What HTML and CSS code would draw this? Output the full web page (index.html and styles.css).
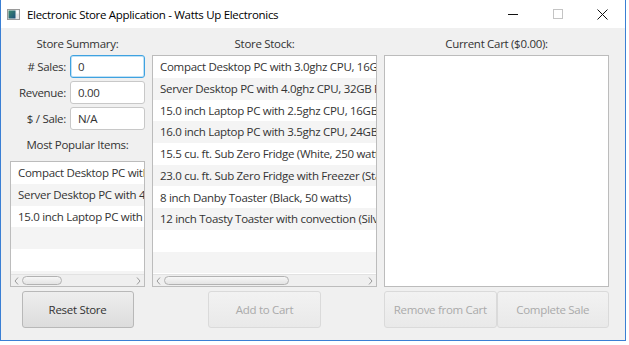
FILE: index.html
```html
<!DOCTYPE html>
<html lang="en">
<head>
    <meta charset="UTF-8">
    <meta name="viewport" content="width=device-width, initial-scale=1.0">
    <link rel="stylesheet" href="styles.css">
    <title>Electronic Store Application - Watts Up Electronics</title>
</head>
<body>
    <div class="window">
        <div class="titlebar">
            <svg class="app-icon" width="13" height="11" viewBox="0 0 13 11">
                <defs>
                    <linearGradient id="ic" x1="0" y1="0" x2="1" y2="1">
                        <stop offset="0" stop-color="#3b8a6e"/>
                        <stop offset="1" stop-color="#1d4f7a"/>
                    </linearGradient>
                </defs>
                <rect x="0.5" y="0.5" width="12" height="10" fill="#e8e8e8" stroke="#9a9a9a"/>
                <rect x="1.5" y="1.5" width="7" height="8" fill="url(#ic)"/>
                <rect x="9.5" y="1.5" width="2" height="3" fill="#fff"/>
            </svg>
            <span class="title">Electronic Store Application - Watts Up Electronics</span>
            <div class="caption-buttons">
                <span class="caption">
                    <svg width="10" height="10" viewBox="0 0 10 10"><path d="M0 5.5H10" stroke="#111" stroke-width="1"/></svg>
                </span>
                <span class="caption">
                    <svg width="10" height="10" viewBox="0 0 10 10"><rect x="0.5" y="0.5" width="9" height="9" fill="none" stroke="#c4c4c4"/></svg>
                </span>
                <span class="caption">
                    <svg width="11" height="11" viewBox="0 0 11 11"><path d="M0.5 0.5L10.5 10.5M10.5 0.5L0.5 10.5" stroke="#111" stroke-width="1"/></svg>
                </span>
            </div>
        </div>

        <div class="content">
            <!-- left column: summary + popular items -->
            <div class="column col-summary">
                <div class="heading">Store Summary:</div>
                <div class="field">
                    <label for="sales"># Sales:</label>
                    <input type="text" id="sales" class="focused" value="0" readonly>
                </div>
                <div class="field">
                    <label for="revenue">Revenue:</label>
                    <input type="text" id="revenue" value="0.00" readonly>
                </div>
                <div class="field">
                    <label for="persale">$ / Sale:</label>
                    <input type="text" id="persale" value="N/A" readonly>
                </div>
                <div class="heading popular-heading">Most Popular Items:</div>
                <div class="list list-popular">
                    <ul class="rows">
                        <li>Compact Desktop PC with 3.0ghz CPU, 16GB RAM</li>
                        <li>Server Desktop PC with 4.0ghz CPU, 32GB RAM</li>
                        <li>15.0 inch Laptop PC with 2.5ghz CPU, 16GB RAM</li>
                    </ul>
                    <div class="hscroll">
                        <span class="arrow"><svg width="5" height="8" viewBox="0 0 5 8"><path d="M4 0.5L1 4L4 7.5" fill="none" stroke="#9a9a9a"/></svg></span>
                        <span class="track"><span class="thumb thumb-popular"></span></span>
                        <span class="arrow"><svg width="5" height="8" viewBox="0 0 5 8"><path d="M1 0.5L4 4L1 7.5" fill="none" stroke="#9a9a9a"/></svg></span>
                    </div>
                </div>
                <div class="button-row">
                    <button class="btn btn-reset">Reset Store</button>
                </div>
            </div>

            <!-- middle column: stock -->
            <div class="column col-stock">
                <div class="heading">Store Stock:</div>
                <div class="list list-stock">
                    <ul class="rows">
                        <li>Compact Desktop PC with 3.0ghz CPU, 16GB RAM, 250GB SSD</li>
                        <li>Server Desktop PC with 4.0ghz CPU, 32GB RAM, 500GB SSD</li>
                        <li>15.0 inch Laptop PC with 2.5ghz CPU, 16GB RAM, 250GB SSD</li>
                        <li>16.0 inch Laptop PC with 3.5ghz CPU, 24GB RAM, 500GB SSD</li>
                        <li>15.5 cu. ft. Sub Zero Fridge (White, 250 watts)</li>
                        <li>23.0 cu. ft. Sub Zero Fridge with Freezer (Stainless Steel, 125 watts)</li>
                        <li>8 inch Danby Toaster (Black, 50 watts)</li>
                        <li>12 inch Toasty Toaster with convection (Silver, 50 watts)</li>
                    </ul>
                    <div class="hscroll">
                        <span class="arrow"><svg width="5" height="8" viewBox="0 0 5 8"><path d="M4 0.5L1 4L4 7.5" fill="none" stroke="#9a9a9a"/></svg></span>
                        <span class="track"><span class="thumb thumb-stock"></span></span>
                        <span class="arrow"><svg width="5" height="8" viewBox="0 0 5 8"><path d="M1 0.5L4 4L1 7.5" fill="none" stroke="#9a9a9a"/></svg></span>
                    </div>
                </div>
                <div class="button-row">
                    <button class="btn btn-add" disabled>Add to Cart</button>
                </div>
            </div>

            <!-- right column: cart -->
            <div class="column col-cart">
                <div class="heading">Current Cart ($0.00):</div>
                <div class="list list-cart"></div>
                <div class="button-row cart-buttons">
                    <button class="btn" disabled>Remove from Cart</button>
                    <button class="btn" disabled>Complete Sale</button>
                </div>
            </div>
        </div>
    </div>
</body>
</html>
```

FILE: styles.css
```css
*{
    box-sizing: border-box;
}
html, body{
    margin: 0;
    background: #fff;
}
body{
    font-family: "Open Sans", "Liberation Sans", sans-serif;
    font-size: 11.5px;
    letter-spacing: -0.3px;
    color: #333;
}
.window{
    width: 626px;
    height: 341px;
    border: 1px solid #3a7fd4;
    border-top: none;
    background: #f0f0f0;
    display: flex;
    flex-direction: column;
}

/* title bar */
.titlebar{
    height: 28px;
    background: #fff;
    display: flex;
    align-items: center;
    padding-left: 6px;
    flex-shrink: 0;
}
.app-icon{
    display: block;
    margin-right: 7px;
    margin-top: 1px;
}
.title{
    font-size: 11.5px;
    color: #000;
    letter-spacing: -0.3px;
}
.caption-buttons{
    margin-left: auto;
    display: flex;
    height: 100%;
}
.caption{
    width: 45px;
    display: flex;
    align-items: center;
    justify-content: center;
}
.caption svg{
    display: block;
}

/* main area */
.content{
    flex: 1;
    display: flex;
    gap: 7px;
    padding: 6px 0 0 9px;
}
.column{
    display: flex;
    flex-direction: column;
}
.col-summary{
    width: 135px;
}
.col-stock, .col-cart{
    width: 225px;
}
.heading{
    text-align: center;
    height: 21px;
    line-height: 20px;
}
.popular-heading{
    margin-top: 2px;
    height: 26px;
}

.field{
    display: flex;
    align-items: center;
    margin-bottom: 3px;
}
.field label{
    width: 56px;
    margin-right: 4px;
    text-align: right;
}
.field input{
    width: 75px;
    height: 23px;
    font: inherit;
    letter-spacing: inherit;
    color: #333;
    padding: 0 7px;
    border: 1px solid #c8c8c8;
    border-radius: 3px;
    background: #fff;
    outline: none;
}
.field input.focused{
    border-color: #3fa2e0;
    box-shadow: 0 0 0 1px #bfe1f6 inset;
}

/* list views */
.list{
    border: 1px solid #bcbcbc;
    background: #fff;
    display: flex;
    flex-direction: column;
    overflow: hidden;
}
.list-popular{
    height: 126px;
}
.list-stock, .list-cart{
    height: 232px;
}
.rows{
    list-style: none;
    margin: 0;
    padding: 0;
    flex: 1;
    background: repeating-linear-gradient(#fff 0 21.75px, #f4f4f4 21.75px 43.5px);
}
.rows li{
    height: 21.75px;
    line-height: 21.75px;
    padding-left: 7px;
    white-space: nowrap;
    overflow: hidden;
}
.hscroll{
    height: 12px;
    display: flex;
    background: #efefef;
    border-top: 1px solid #e2e2e2;
}
.arrow{
    width: 11px;
    display: flex;
    align-items: center;
    justify-content: center;
}
.arrow svg{
    display: block;
}
.track{
    flex: 1;
    padding: 1px 0;
}
.thumb{
    display: block;
    height: 100%;
    border: 1px solid #b2b2b2;
    border-radius: 5px;
    background: linear-gradient(#f6f6f6, #e4e4e4);
}
.thumb-popular{
    width: 40px;
}
.thumb-stock{
    width: 125px;
}

/* buttons */
.button-row{
    display: flex;
    justify-content: center;
    margin-top: 4px;
}
.btn{
    width: 112px;
    height: 37px;
    font: inherit;
    letter-spacing: inherit;
    color: #333;
    border: 1px solid #b8b8b8;
    border-radius: 3px;
    background: linear-gradient(#eeeeee, #dcdcdc);
    padding: 0;
}
.btn:disabled{
    color: #aaa;
    border-color: #dadada;
    background: linear-gradient(#f2f2f2, #e9e9e9);
}
.btn-add{
    width: 113px;
}
.cart-buttons{
    justify-content: space-between;
}
.cart-buttons .btn{
    width: 113px;
}
```
